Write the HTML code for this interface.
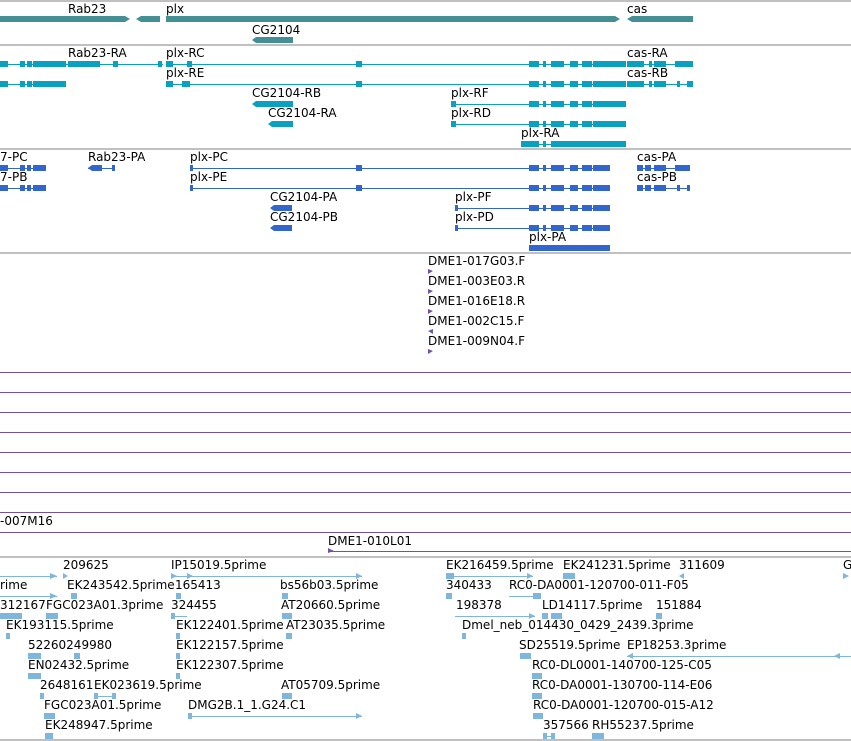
<!DOCTYPE html>
<html><head><meta charset="utf-8"><style>
html,body{margin:0;padding:0;background:#fff;width:851px;height:741px;overflow:hidden}
svg{display:block}
text{font-family:"DejaVu Sans","Liberation Sans",sans-serif;font-size:12px;fill:#000}
</style></head><body>
<svg width="851" height="741" viewBox="0 0 851 741" xmlns="http://www.w3.org/2000/svg">
<g fill="#c0c0c0"><rect x="0" y="0" width="851" height="2"/><rect x="0" y="44" width="851" height="2"/><rect x="0" y="148" width="851" height="2"/><rect x="0" y="252" width="851" height="2"/><rect x="0" y="556" width="851" height="2"/><rect x="0" y="739" width="851" height="2"/></g>

<!-- Track 1 -->
<g fill="#438f93">
<polygon points="0,16 125,16 130,19 125,22 0,22"/>
<polygon points="136,19 141,16 160,16 160,22 141,22"/>
<polygon points="166,16 615,16 620,19 615,22 166,22"/>
<polygon points="627,19 632,16 693,16 693,22 632,22"/>
<polygon points="252,40 256,37 293,37 293,43 256,43"/>
</g>
<text x="68" y="13">Rab23</text><text x="166" y="13">plx</text><text x="627" y="13">cas</text><text x="252" y="34">CG2104</text>

<!-- Track 2 -->
<g fill="#0aa0c0">
<rect x="0" y="64" width="163" height="1"/><rect x="166" y="64" width="460" height="1"/><rect x="627" y="64" width="66" height="1"/>
<rect x="0" y="61" width="8" height="6"/><rect x="20" y="61" width="5" height="6"/><rect x="27" y="61" width="5" height="6"/><rect x="33" y="61" width="33" height="6"/><rect x="68" y="61" width="32" height="6"/><rect x="113" y="61" width="5" height="6"/><rect x="158" y="61" width="4" height="6"/>
<rect x="166" y="61" width="7" height="6"/><rect x="187" y="61" width="5" height="6"/><rect x="356" y="61" width="6" height="6"/>
<rect x="529" y="61" width="10" height="6"/><rect x="543" y="61" width="3" height="6"/><rect x="551" y="61" width="13" height="6"/><rect x="570" y="61" width="8" height="6"/><rect x="582" y="61" width="10" height="6"/><rect x="593" y="61" width="33" height="6"/>
<rect x="627" y="61" width="17" height="6"/><rect x="649" y="61" width="3" height="6"/><rect x="654" y="61" width="12" height="6"/><rect x="675" y="61" width="18" height="6"/>

<rect x="0" y="84" width="66" height="1"/><rect x="166" y="84" width="460" height="1"/><rect x="627" y="84" width="66" height="1"/>
<rect x="0" y="81" width="8" height="6"/><rect x="20" y="81" width="5" height="6"/><rect x="27" y="81" width="5" height="6"/><rect x="33" y="81" width="33" height="6"/>
<rect x="166" y="81" width="7" height="6"/><rect x="182" y="81" width="8" height="6"/><rect x="356" y="81" width="6" height="6"/>
<rect x="529" y="81" width="10" height="6"/><rect x="543" y="81" width="3" height="6"/><rect x="551" y="81" width="13" height="6"/><rect x="570" y="81" width="8" height="6"/><rect x="582" y="81" width="10" height="6"/><rect x="593" y="81" width="33" height="6"/>
<rect x="627" y="81" width="17" height="6"/><rect x="649" y="81" width="3" height="6"/><rect x="654" y="81" width="12" height="6"/><rect x="677" y="81" width="3" height="6"/><rect x="687" y="81" width="6" height="6"/>

<polygon points="252,104 256,101 293,101 293,107 256,107"/>
<rect x="451" y="104" width="175" height="1"/><rect x="451" y="101" width="5" height="6"/>
<rect x="529" y="101" width="10" height="6"/><rect x="543" y="101" width="3" height="6"/><rect x="551" y="101" width="13" height="6"/><rect x="570" y="101" width="8" height="6"/><rect x="582" y="101" width="10" height="6"/><rect x="593" y="101" width="33" height="6"/>

<polygon points="268,124 272,121 293,121 293,127 272,127"/>
<rect x="451" y="124" width="175" height="1"/><rect x="451" y="121" width="5" height="6"/>
<rect x="529" y="121" width="10" height="6"/><rect x="543" y="121" width="3" height="6"/><rect x="551" y="121" width="13" height="6"/><rect x="570" y="121" width="8" height="6"/><rect x="582" y="121" width="10" height="6"/><rect x="593" y="121" width="33" height="6"/>

<rect x="521" y="141" width="18" height="6"/><rect x="539" y="144" width="12" height="1"/><rect x="543" y="141" width="3" height="6"/><rect x="551" y="141" width="75" height="6"/>
</g>
<text x="68" y="57">Rab23-RA</text><text x="166" y="57">plx-RC</text><text x="627" y="57">cas-RA</text>
<text x="166" y="77">plx-RE</text><text x="627" y="77">cas-RB</text>
<text x="252" y="97">CG2104-RB</text><text x="451" y="97">plx-RF</text>
<text x="268" y="117">CG2104-RA</text><text x="451" y="117">plx-RD</text>
<text x="521" y="137">plx-RA</text>

<!-- Track 3 -->
<g fill="#3366cc">
<rect x="0" y="168" width="46" height="1"/><rect x="0" y="165" width="8" height="6"/><rect x="20" y="165" width="5" height="6"/><rect x="27" y="165" width="4" height="6"/><rect x="33" y="165" width="13" height="6"/>
<rect x="88" y="168" width="27" height="1"/><polygon points="88,168 92,165 102,165 102,171 92,171"/><rect x="112" y="165" width="3" height="6"/>
<rect x="190" y="168" width="420" height="1"/><rect x="190" y="165" width="3" height="6"/><rect x="356" y="165" width="6" height="6"/>
<rect x="529" y="165" width="10" height="6"/><rect x="543" y="165" width="3" height="6"/><rect x="551" y="165" width="13" height="6"/><rect x="570" y="165" width="8" height="6"/><rect x="582" y="165" width="10" height="6"/><rect x="593" y="165" width="17" height="6"/>
<rect x="637" y="168" width="53" height="1"/><rect x="637" y="165" width="6" height="6"/><rect x="645" y="165" width="6" height="6"/><rect x="654" y="165" width="12" height="6"/><rect x="675" y="165" width="15" height="6"/>

<rect x="0" y="188" width="46" height="1"/><rect x="0" y="185" width="8" height="6"/><rect x="20" y="185" width="5" height="6"/><rect x="27" y="185" width="4" height="6"/><rect x="33" y="185" width="13" height="6"/>
<rect x="190" y="188" width="420" height="1"/><rect x="190" y="185" width="3" height="6"/><rect x="356" y="185" width="6" height="6"/>
<rect x="529" y="185" width="10" height="6"/><rect x="543" y="185" width="3" height="6"/><rect x="551" y="185" width="13" height="6"/><rect x="570" y="185" width="8" height="6"/><rect x="582" y="185" width="10" height="6"/><rect x="593" y="185" width="17" height="6"/>
<rect x="637" y="188" width="53" height="1"/><rect x="637" y="185" width="6" height="6"/><rect x="645" y="185" width="6" height="6"/><rect x="654" y="185" width="12" height="6"/><rect x="677" y="185" width="3" height="6"/><rect x="687" y="185" width="3" height="6"/>

<polygon points="270,208 274,205 292,205 292,211 274,211"/>
<rect x="455" y="208" width="155" height="1"/><rect x="455" y="205" width="3" height="6"/>
<rect x="529" y="205" width="10" height="6"/><rect x="543" y="205" width="3" height="6"/><rect x="551" y="205" width="13" height="6"/><rect x="570" y="205" width="8" height="6"/><rect x="582" y="205" width="10" height="6"/><rect x="593" y="205" width="17" height="6"/>
<polygon points="270,228 274,225 292,225 292,231 274,231"/>
<rect x="455" y="228" width="155" height="1"/><rect x="455" y="225" width="3" height="6"/>
<rect x="529" y="225" width="10" height="6"/><rect x="543" y="225" width="3" height="6"/><rect x="551" y="225" width="13" height="6"/><rect x="570" y="225" width="8" height="6"/><rect x="582" y="225" width="10" height="6"/><rect x="593" y="225" width="17" height="6"/>
<rect x="529" y="245" width="81" height="6"/>
</g>
<text x="0" y="161">7-PC</text><text x="88" y="161">Rab23-PA</text><text x="190" y="161">plx-PC</text><text x="637" y="161">cas-PA</text>
<text x="0" y="181">7-PB</text><text x="190" y="181">plx-PE</text><text x="637" y="181">cas-PB</text>
<text x="270" y="201">CG2104-PA</text><text x="455" y="201">plx-PF</text>
<text x="270" y="221">CG2104-PB</text><text x="455" y="221">plx-PD</text>
<text x="529" y="241">plx-PA</text>

<!-- Track 4 -->
<g fill="#6f52ad">
<polygon points="428,269 433,271 428,274"/><polygon points="428,289 433,291 428,294"/><polygon points="428,309 433,311 428,314"/><polygon points="433,329 428,331 433,334"/><polygon points="428,349 433,351 428,354"/>
<rect x="0" y="372" width="851" height="1"/><rect x="0" y="392" width="851" height="1"/><rect x="0" y="412" width="851" height="1"/><rect x="0" y="432" width="851" height="1"/><rect x="0" y="452" width="851" height="1"/><rect x="0" y="472" width="851" height="1"/><rect x="0" y="492" width="851" height="1"/><rect x="0" y="512" width="851" height="1"/><rect x="0" y="532" width="851" height="1"/>
<rect x="328" y="551" width="523" height="1"/><polygon points="328,548 334,551 328,553"/>
</g>
<text x="428" y="265">DME1-017G03.F</text><text x="428" y="285">DME1-003E03.R</text><text x="428" y="305">DME1-016E18.R</text><text x="428" y="325">DME1-002C15.F</text><text x="428" y="345">DME1-009N04.F</text>
<text x="0" y="525">-007M16</text><text x="328" y="545">DME1-010L01</text>

<!-- Track 5 -->
<g fill="#7fb6de">
<rect x="0" y="576" width="57" height="1"/><polygon points="50,573 57,576 50,579"/><polygon points="63,573 68,576 63,579"/>
<rect x="171" y="576" width="191" height="1"/><polygon points="171,573 177,576 171,579"/><polygon points="187,573 193,576 187,579"/><polygon points="356,573 362,576 356,579"/>
<rect x="446" y="576" width="87" height="1"/><rect x="446" y="573" width="8" height="6"/><polygon points="527,573 533,576 527,579"/>
<rect x="563" y="573" width="12" height="6"/><polygon points="684,573 679,576 684,579"/><polygon points="843,573 849,576 843,579"/>

<rect x="0" y="596" width="57" height="1"/><polygon points="50,593 57,596 50,599"/><rect x="71" y="593" width="6" height="6"/><rect x="176" y="593" width="5" height="6"/><rect x="282" y="593" width="6" height="6"/><rect x="446" y="593" width="6" height="6"/>
<rect x="509" y="596" width="32" height="1"/><rect x="533" y="593" width="8" height="6"/>

<rect x="0" y="613" width="22" height="6"/><rect x="46" y="613" width="12" height="6"/><rect x="171" y="616" width="16" height="1"/><rect x="171" y="613" width="4" height="6"/><rect x="282" y="613" width="10" height="6"/>
<rect x="455" y="616" width="80" height="1"/><polygon points="529,613 535,616 529,619"/><rect x="542" y="613" width="6" height="6"/><rect x="551" y="613" width="11" height="6"/><rect x="656" y="613" width="6" height="6"/>

<rect x="6" y="633" width="4" height="6"/><rect x="176" y="633" width="4" height="6"/><rect x="286" y="633" width="6" height="6"/><rect x="462" y="633" width="4" height="6"/>
<rect x="28" y="653" width="13" height="6"/><rect x="74" y="653" width="6" height="6"/><rect x="176" y="653" width="4" height="6"/><rect x="520" y="653" width="11" height="6"/>
<rect x="627" y="656" width="224" height="1"/><polygon points="633,653 627,656 633,659"/><polygon points="840,653 834,656 840,659"/>
<rect x="28" y="673" width="13" height="6"/><rect x="176" y="673" width="4" height="6"/><rect x="532" y="673" width="10" height="6"/>
<rect x="40" y="693" width="4" height="6"/><rect x="94" y="696" width="22" height="1"/><rect x="94" y="693" width="4" height="6"/><rect x="112" y="693" width="4" height="6"/><rect x="282" y="693" width="10" height="6"/><rect x="532" y="693" width="10" height="6"/>
<rect x="44" y="713" width="11" height="6"/><rect x="188" y="716" width="174" height="1"/><rect x="188" y="713" width="4" height="6"/><polygon points="356,713 362,716 356,719"/><rect x="533" y="713" width="10" height="6"/>
<rect x="45" y="733" width="8" height="6"/><rect x="543" y="736" width="12" height="1"/><rect x="543" y="733" width="4" height="6"/><rect x="551" y="733" width="4" height="6"/><rect x="592" y="733" width="12" height="6"/>
</g>
<text x="63" y="569">209625</text><text x="171" y="569">IP15019.5prime</text><text x="446" y="569">EK216459.5prime</text><text x="563" y="569">EK241231.5prime</text><text x="679" y="569">311609</text><text x="843" y="569">G</text>
<text x="0" y="589">rime</text><text x="67" y="589">EK243542.5prime</text><text x="175" y="589">165413</text><text x="280" y="589">bs56b03.5prime</text><text x="446" y="589">340433</text><text x="509" y="589">RC0-DA0001-120700-011-F05</text>
<text x="0" y="609">312167</text><text x="46" y="609">FGC023A01.3prime</text><text x="171" y="609">324455</text><text x="281" y="609">AT20660.5prime</text><text x="456" y="609">198378</text><text x="542" y="609">LD14117.5prime</text><text x="656" y="609">151884</text>
<text x="6" y="629">EK193115.5prime</text><text x="176" y="629">EK122401.5prime</text><text x="286" y="629">AT23035.5prime</text><text x="462" y="629">Dmel_neb_014430_0429_2439.3prime</text>
<text x="28" y="649">52260249980</text><text x="176" y="649">EK122157.5prime</text><text x="519" y="649">SD25519.5prime</text><text x="627" y="649">EP18253.3prime</text>
<text x="28" y="669">EN02432.5prime</text><text x="176" y="669">EK122307.5prime</text><text x="532" y="669">RC0-DL0001-140700-125-C05</text>
<text x="40" y="689">2648161</text><text x="94" y="689">EK023619.5prime</text><text x="281" y="689">AT05709.5prime</text><text x="532" y="689">RC0-DA0001-130700-114-E06</text>
<text x="44" y="709">FGC023A01.5prime</text><text x="188" y="709">DMG2B.1_1.G24.C1</text><text x="533" y="709">RC0-DA0001-120700-015-A12</text>
<text x="45" y="729">EK248947.5prime</text><text x="543" y="729">357566</text><text x="592" y="729">RH55237.5prime</text>
</svg>
</body></html>
